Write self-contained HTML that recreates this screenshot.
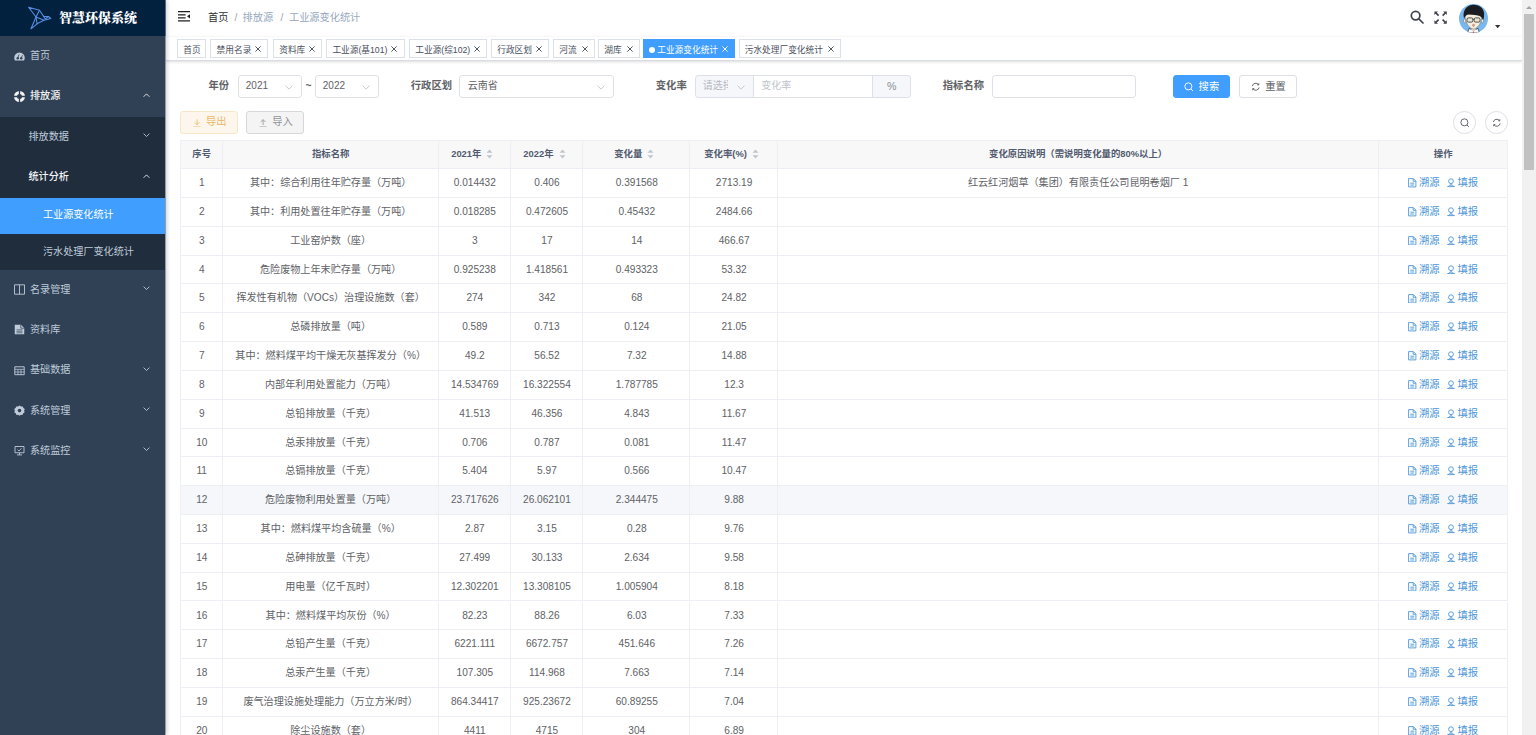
<!DOCTYPE html>
<html lang="zh-CN">
<head>
<meta charset="utf-8">
<title>智慧环保系统</title>
<style>
*{box-sizing:border-box;margin:0;padding:0}
html,body{width:1536px;height:735px;overflow:hidden;background:#fff}
body{position:relative;font-family:"Liberation Sans","Noto Sans CJK SC",sans-serif;font-size:10px;color:#606266;-webkit-font-smoothing:antialiased}
svg{display:block}
/* sidebar */
#side{position:absolute;left:0;top:0;width:165px;height:735px;background:#304156;box-shadow:1px 0 0 rgba(48,65,86,.4),2px 0 4px rgba(0,21,41,.2);z-index:5}
#logo{position:absolute;left:0;top:0;width:165px;height:36px;background:#02213f;box-shadow:1px 0 0 rgba(2,33,63,.4)}
#logo .ttl{position:absolute;left:59px;top:0;line-height:35px;font-family:"Liberation Serif","Noto Serif CJK SC",serif;font-weight:900;font-size:13px;color:#fff;white-space:nowrap}
.mi{position:absolute;left:0;width:165px;height:40.3px;line-height:40.3px;color:#bfcbd9;font-size:10.1px;white-space:nowrap}
.mi .ic{position:absolute;left:14px;top:14px;width:11px;height:11px}
.mi .tx{position:absolute;left:30px;top:-0.4px}
.mi .ar{position:absolute;left:143.2px;top:16.2px;width:7px;height:4.4px}
.mi.sub{background:#1f2d3d}
.mi.sub .tx{left:28.5px}
.mi.sub3{background:#1f2d3d;height:36.3px;line-height:36.3px}
.mi.sub3 .tx{left:43px}
.mi.on{background:#409eff;color:#fff}
.mi.open{color:#f4f4f5;font-weight:500}
/* navbar */
#nav{position:absolute;left:166px;top:0;width:1356px;height:36.5px;background:#fff;box-shadow:0 1px 3px rgba(0,21,41,.08)}
#bc{position:absolute;left:42px;top:0;line-height:35.6px;font-size:10.2px;white-space:nowrap;color:#97a8be}
#bc span{position:absolute;top:0}
/* tags */
#tags{position:absolute;left:166px;top:36.5px;width:1356px;height:24px;background:#fff;border-bottom:1px solid #d8dce5;box-shadow:0 1px 3px 0 rgba(0,0,0,.12),0 0 3px 0 rgba(0,0,0,.04)}
.tg{position:absolute;top:2.6px;height:18.8px;line-height:20px;border:1px solid #dce0e8;background:#fff;color:#495060;font-size:8.7px;white-space:nowrap;text-align:left;padding-left:5.2px}
.tg.lk{}
.tg.lk b{font-weight:400}
.tg svg{position:absolute;right:6.3px;top:6.2px}
.tg.on{background:#409eff;border-color:#409eff;color:#fff}
/* filter */
.lb{position:absolute;top:75px;height:22.4px;line-height:22.6px;font-weight:700;color:#606266;font-size:10.3px;white-space:nowrap}
.ip{position:absolute;top:75.2px;height:22.4px;border:1px solid #dde0e7;border-radius:3.2px;background:#fff;font-size:10px;line-height:20px;color:#606266;padding-left:7.3px;white-space:nowrap;overflow:hidden}
.ip .dn{position:absolute;right:8px;top:8.5px;width:8px;height:5px}
.btn{position:absolute;height:22.5px;border:1px solid #dcdfe6;border-radius:3px;font-size:10.3px;line-height:20.4px;white-space:nowrap}
.btn svg{position:absolute}
/* table */
#tb{position:absolute;left:180px;top:140px;width:1327.9px;height:600px;border-left:1px solid #edeff5;border-top:1px solid #edeff5}
.tr{position:absolute;left:0;width:1326.9px;height:28.82px;border-bottom:1px solid #edeff5;line-height:28px;font-size:10.1px;color:#606266}
.tr.hd{background:#f8f8f9;color:#515a6e;font-weight:700;font-size:9.4px;line-height:25px}
.tr.hv{background:#f5f7fa}
.c{position:absolute;top:0;height:100%;border-right:1px solid #edeff5;text-align:center;white-space:nowrap;overflow:hidden;padding-left:1px}
.c1{left:0;width:41.5px}.c2{left:41.5px;width:216.3px}.c3{left:257.8px;width:72px}.c4{left:329.8px;width:72.3px}
.c5{left:402.1px;width:107.4px}.c6{left:509.5px;width:87.2px}.c7{left:596.7px;width:600.9px}.c8{left:1197.6px;width:129.3px;padding-left:1px}
.op{color:#4d95d8;font-size:10.3px}
.so{display:inline-block;vertical-align:middle;width:17px;height:10px;position:relative;top:-1px}
/* scrollbar */
#sb{position:absolute;left:1522.4px;top:0;width:13.6px;height:735px;background:#f1f1f1}
#sb .th{position:absolute;left:1.7px;top:13.7px;width:10.2px;height:156.5px;background:#c1c1c1}
#sb .up{position:absolute;left:3.9px;top:5.8px;width:0;height:0;border-left:3px solid transparent;border-right:3px solid transparent;border-bottom:3.3px solid #a3a3a3}
</style>
</head>
<body>
<div id="side">
<div id="logo"><svg style="position:absolute;left:24px;top:2px" width="32" height="32" viewBox="0 0 32 32" fill="none" stroke="#588fe4" stroke-width="1.05" stroke-linejoin="round" stroke-linecap="round">
<path d="M4.6 5.2 L15.5 8.3 L12 15 Z"/>
<path d="M15.5 8.3 L19.6 14.4 L24.4 14.5 L26.8 16.5 L20 18.3 L13.1 21.8 L7 26.8 L12 15"/>
<path d="M12 15 L13.1 21.8 M12 15 L20 18.3"/>
<path d="M19.6 14.4 L21.3 17 L24.4 14.5"/>
</svg><div class="ttl">智慧环保系统</div></div>
<div class="mi " style="top:36.6px"><svg class="ic" viewBox="0 0 22 22"><path d="M11 3 A10.5 10.5 0 0 0 0.5 13.5 C0.5 15.5 1 17.2 2 18.8 L20 18.8 C21 17.2 21.5 15.5 21.5 13.5 A10.5 10.5 0 0 0 11 3 Z" fill="currentColor"/><circle cx="7.5" cy="14.5" r="2.4" fill="#304156"/><circle cx="14.5" cy="14.5" r="2.4" fill="#304156"/><path d="M7.5 14.5 L10 7 M14.5 14.5 L17 8.5" stroke="#304156" stroke-width="1.6"/></svg><span class="tx">首页</span></div>
<div class="mi open" style="top:76.87px"><svg class="ic" viewBox="0 0 22 22"><circle cx="11" cy="11" r="8" fill="none" stroke="currentColor" stroke-width="6"/><path d="M11 0 V22 M0 11 H22" stroke="#304156" stroke-width="2.6"/></svg><span class="tx">排放源</span><svg class="ar" viewBox="0 0 8 5"><path d="M0.7 4.3 L4 1 L7.3 4.3" fill="none" stroke="currentColor" stroke-width="1"/></svg></div>
<div class="mi sub" style="top:117.14000000000001px"><span class="tx">排放数据</span><svg class="ar" viewBox="0 0 8 5"><path d="M0.7 0.7 L4 4 L7.3 0.7" fill="none" stroke="currentColor" stroke-width="1"/></svg></div>
<div class="mi sub open" style="top:157.41000000000003px"><span class="tx">统计分析</span><svg class="ar" viewBox="0 0 8 5"><path d="M0.7 4.3 L4 1 L7.3 4.3" fill="none" stroke="currentColor" stroke-width="1"/></svg></div>
<div class="mi sub3 on" style="top:197.68000000000004px"><span class="tx">工业源变化统计</span></div>
<div class="mi sub3" style="top:233.92000000000004px"><span class="tx">污水处理厂变化统计</span></div>
<div class="mi " style="top:270.16px"><svg class="ic" viewBox="0 0 22 22"><path d="M1 1.6 H21 V20.4 H1 Z M11 1.6 V20.4" fill="none" stroke="currentColor" stroke-width="1.8"/></svg><span class="tx">名录管理</span><svg class="ar" viewBox="0 0 8 5"><path d="M0.7 0.7 L4 4 L7.3 0.7" fill="none" stroke="currentColor" stroke-width="1"/></svg></div>
<div class="mi " style="top:310.43px"><svg class="ic" viewBox="0 0 22 22"><path d="M1.5 1.5 H14 L20.5 8 V20.5 H1.5 Z" fill="currentColor"/><path d="M13.6 1.5 V8.4 H20.5" fill="none" stroke="#304156" stroke-width="1.5"/><path d="M5 11.6 H17 M5 14.6 H17 M5 17.6 H17" stroke="#304156" stroke-width="1.3"/></svg><span class="tx">资料库</span></div>
<div class="mi " style="top:350.7px"><svg class="ic" viewBox="0 0 22 22"><path d="M1.6 3.6 H20.4 V19.4 H1.6 Z" fill="none" stroke="currentColor" stroke-width="1.9"/><path d="M1.6 8.6 H20.4 M1.6 14 H20.4 M8 8.6 V19.4 M14 8.6 V19.4" stroke="currentColor" stroke-width="1.5"/></svg><span class="tx">基础数据</span><svg class="ar" viewBox="0 0 8 5"><path d="M0.7 0.7 L4 4 L7.3 0.7" fill="none" stroke="currentColor" stroke-width="1"/></svg></div>
<div class="mi " style="top:390.96999999999997px"><svg class="ic" viewBox="0 0 22 22"><path d="M11 1 L14 3 L17.5 2.8 L18.8 6 L21.5 8.2 L20.3 11.5 L21.2 14.8 L18.3 16.6 L17 19.8 L13.6 19.6 L11 21.6 L8.2 19.6 L4.8 19.8 L3.6 16.6 L0.7 14.8 L1.6 11.5 L0.5 8.2 L3.2 6 L4.5 2.8 L8 3 Z" fill="currentColor"/><circle cx="11" cy="11.2" r="3.6" fill="#304156"/></svg><span class="tx">系统管理</span><svg class="ar" viewBox="0 0 8 5"><path d="M0.7 0.7 L4 4 L7.3 0.7" fill="none" stroke="currentColor" stroke-width="1"/></svg></div>
<div class="mi " style="top:431.23999999999995px"><svg class="ic" viewBox="0 0 22 22"><path d="M2 3 H20 V15.5 H2 Z" fill="none" stroke="currentColor" stroke-width="1.8"/><path d="M11 15.5 V19.5 M6 19.8 H16" stroke="currentColor" stroke-width="1.8"/><path d="M7 9.5 L10 12 L15 6.5" fill="none" stroke="currentColor" stroke-width="1.6"/></svg><span class="tx">系统监控</span><svg class="ar" viewBox="0 0 8 5"><path d="M0.7 0.7 L4 4 L7.3 0.7" fill="none" stroke="currentColor" stroke-width="1"/></svg></div>
</div>
<div id="nav"><svg style="position:absolute;left:12px;top:11.4px" width="12" height="10.6" viewBox="0 0 12 10.6"><path d="M0 0.7 H12 M0 3.8 H7.6 M0 6.8 H7.6 M0 9.9 H12" stroke="#1f1f1f" stroke-width="1.25"/><path d="M12 3.2 L9 5.3 L12 7.4 Z" fill="#1f1f1f"/></svg>
<div id="bc"><span style="left:0;color:#303133">首页</span><span style="left:26.4px;color:#9da0a6;font-weight:400">/</span><span style="left:34.6px">排放源</span><span style="left:72.4px;color:#9da0a6;font-weight:400">/</span><span style="left:81px">工业源变化统计</span></div>
<svg style="position:absolute;left:1243.6px;top:10.4px" width="14" height="14" viewBox="0 0 14 14" fill="none" stroke="#40444d" stroke-width="1.7"><circle cx="5.6" cy="5.6" r="4.3"/><path d="M8.8 8.8 L13 13" stroke-linecap="round"/></svg><svg style="position:absolute;left:1268px;top:10.8px" width="13.2" height="13.2" viewBox="0 0 13.2 13.2" fill="#40444d" stroke="#40444d" stroke-width="1.6">
<path d="M4.6 4.6 L1.6 1.6 M8.6 4.6 L11.6 1.6 M4.6 8.6 L1.6 11.6 M8.6 8.6 L11.6 11.6" fill="none"/>
<path d="M0.4 0.4 H4 L0.4 4 Z M12.8 0.4 V4 L9.2 0.4 Z M0.4 12.8 V9.2 L4 12.8 Z M12.8 12.8 H9.2 L12.8 9.2 Z" stroke="none"/></svg><svg style="position:absolute;left:1293px;top:4.1px" width="29" height="29" viewBox="0 0 29 29">
<defs><clipPath id="avc"><circle cx="14.5" cy="14.5" r="14.5"/></clipPath></defs>
<g clip-path="url(#avc)"><rect width="29" height="29" fill="#78b8ee"/>
<path d="M8.6 29 L10 24.4 L14.5 26.4 L19 24.4 L20.4 29 Z" fill="#fafafa" stroke="#2a3442" stroke-width="0.7"/>
<path d="M12.4 22.5 H16.6 V26 L14.5 27.6 L12.4 26 Z" fill="#e9d9c4"/>
<ellipse cx="5.7" cy="16.8" rx="1.2" ry="1.9" fill="#f5ecdc" stroke="#555" stroke-width="0.4"/><ellipse cx="23.3" cy="16.8" rx="1.2" ry="1.9" fill="#f5ecdc" stroke="#555" stroke-width="0.4"/>
<path d="M6 10 C5.8 19 10.5 24.9 14.5 24.9 C18.5 24.9 23.2 19 23 10 Z" fill="#f5ecdc" stroke="#555" stroke-width="0.4"/>
<path d="M4.8 13.6 C3.2 5.4 9 0.7 14.5 0.7 C21 0.7 26.2 5 25 12.4 C24.9 14 24.5 15.6 24 15.8 C22.8 12.4 20 11.4 16 11 C12 10.6 8.4 10 7.2 11.6 C6.4 12.6 5.6 12.8 5.4 14.4 Z" fill="#1b1d22"/>
<rect x="8" y="13.9" width="5.8" height="4.2" rx="1.3" fill="#e9e6d6" stroke="#2b2b2b" stroke-width="0.8"/><rect x="15.2" y="13.9" width="5.8" height="4.2" rx="1.3" fill="#e9e6d6" stroke="#2b2b2b" stroke-width="0.8"/><path d="M13.8 15.4 H15.2" stroke="#2b2b2b" stroke-width="0.8"/>
<ellipse cx="14.5" cy="21.3" rx="1" ry="1.2" fill="#e3a08c" stroke="#8a5a4a" stroke-width="0.3"/>
<path d="M14.5 26.4 L13.9 29 H15.1 Z" fill="#c9504a"/>
</g></svg><svg style="position:absolute;left:1329.2px;top:24.6px" width="5.4" height="3.3" viewBox="0 0 5.4 3.3"><path d="M0 0 H5.4 L2.7 3.3 Z" fill="#33363c"/></svg></div>
<div id="tags">
<div class="tg" style="left:11.0px;width:29.2px">首页</div>
<div class="tg" style="left:44.4px;width:58.1px">禁用名录<svg width="6" height="6" viewBox="0 0 6 6"><path d="M0.4 0.4 L5.6 5.6 M5.6 0.4 L0.4 5.6" stroke="currentColor" stroke-width="0.95" fill="none"/></svg></div>
<div class="tg" style="left:107.0px;width:49.2px">资料库<svg width="6" height="6" viewBox="0 0 6 6"><path d="M0.4 0.4 L5.6 5.6 M5.6 0.4 L0.4 5.6" stroke="currentColor" stroke-width="0.95" fill="none"/></svg></div>
<div class="tg lk" style="left:160.2px;width:78.5px"><b>工业源(基101)</b><svg width="6" height="6" viewBox="0 0 6 6"><path d="M0.4 0.4 L5.6 5.6 M5.6 0.4 L0.4 5.6" stroke="currentColor" stroke-width="0.95" fill="none"/></svg></div>
<div class="tg lk" style="left:243.0px;width:78.0px"><b>工业源(综102)</b><svg width="6" height="6" viewBox="0 0 6 6"><path d="M0.4 0.4 L5.6 5.6 M5.6 0.4 L0.4 5.6" stroke="currentColor" stroke-width="0.95" fill="none"/></svg></div>
<div class="tg" style="left:325.0px;width:58.0px">行政区划<svg width="6" height="6" viewBox="0 0 6 6"><path d="M0.4 0.4 L5.6 5.6 M5.6 0.4 L0.4 5.6" stroke="currentColor" stroke-width="0.95" fill="none"/></svg></div>
<div class="tg" style="left:387.0px;width:42.0px">河流<svg width="6" height="6" viewBox="0 0 6 6"><path d="M0.4 0.4 L5.6 5.6 M5.6 0.4 L0.4 5.6" stroke="currentColor" stroke-width="0.95" fill="none"/></svg></div>
<div class="tg" style="left:432.0px;width:41.8px">湖库<svg width="6" height="6" viewBox="0 0 6 6"><path d="M0.4 0.4 L5.6 5.6 M5.6 0.4 L0.4 5.6" stroke="currentColor" stroke-width="0.95" fill="none"/></svg></div>
<div class="tg on lk" style="left:477.0px;width:91.8px"><em style="display:inline-block;width:6px;height:6px;border-radius:50%;background:#fff;margin-right:2px;position:relative;top:0px"></em><b>工业源变化统计</b><svg width="6" height="6" viewBox="0 0 6 6"><path d="M0.4 0.4 L5.6 5.6 M5.6 0.4 L0.4 5.6" stroke="currentColor" stroke-width="0.95" fill="none"/></svg></div>
<div class="tg" style="left:572.5px;width:102.3px">污水处理厂变化统计<svg width="6" height="6" viewBox="0 0 6 6"><path d="M0.4 0.4 L5.6 5.6 M5.6 0.4 L0.4 5.6" stroke="currentColor" stroke-width="0.95" fill="none"/></svg></div>
</div>
<div class="lb" style="left:208.5px">年份</div>
<div class="ip" style="left:237.5px;width:64.3px">2021<svg class="dn" viewBox="0 0 8 5"><path d="M0.5 0.6 L4 4.2 L7.5 0.6" fill="none" stroke="#c0c4cc" stroke-width="0.9"/></svg></div>
<div class="lb" style="left:305.4px">~</div>
<div class="ip" style="left:314.5px;width:64.3px">2022<svg class="dn" viewBox="0 0 8 5"><path d="M0.5 0.6 L4 4.2 L7.5 0.6" fill="none" stroke="#c0c4cc" stroke-width="0.9"/></svg></div>
<div class="lb" style="left:410.8px">行政区划</div>
<div class="ip" style="left:459.4px;width:154.6px">云南省<svg class="dn" viewBox="0 0 8 5"><path d="M0.5 0.6 L4 4.2 L7.5 0.6" fill="none" stroke="#c0c4cc" stroke-width="0.9"/></svg></div>
<div class="lb" style="left:655.8px">变化率</div>
<div class="ip" style="left:695.3px;width:58.6px;background:#f5f7fa;border-radius:3.2px 0 0 3.2px;color:#b4b8c0;padding-left:6.5px"><span style="display:inline-block;width:25.6px;overflow:hidden;vertical-align:top">请选择</span><svg class="dn" viewBox="0 0 8 5"><path d="M0.5 0.6 L4 4.2 L7.5 0.6" fill="none" stroke="#c0c4cc" stroke-width="0.9"/></svg></div>
<div class="ip" style="left:752.9px;width:120px;border-radius:0;color:#c0c4cc">变化率</div>
<div class="ip" style="left:871.9px;width:38.8px;background:#f5f7fa;border-radius:0 3.2px 3.2px 0;color:#8a8d93;padding:0 0 0 1px;text-align:center;font-size:10.6px">%</div>
<div class="lb" style="left:942.8px">指标名称</div>
<div class="ip" style="left:992px;width:143.8px"></div>
<div class="btn" style="left:1173px;top:75.2px;width:57.4px;background:#409eff;border-color:#409eff;color:#fff"><svg style="left:10.4px;top:5.4px" width="9.5" height="9.5" viewBox="0 0 10 10" fill="none" stroke="#fff" stroke-width="1"><circle cx="4.6" cy="4.6" r="3.7"/><path d="M7.3 7.3 L9.4 9.4"/></svg><span style="position:absolute;left:24.6px;top:0.4px">搜索</span></div>
<div class="btn" style="left:1239px;top:75.2px;width:57.6px;background:#fff;color:#606266"><svg style="left:11.4px;top:5.6px" width="9.5" height="9.5" viewBox="0 0 10 10" fill="none" stroke="#606266" stroke-width="1"><path d="M1.35 4.3 A3.7 3.7 0 0 1 8 2.9"/><path d="M8.65 5.7 A3.7 3.7 0 0 1 2 7.1"/><path d="M8.2 1.3 V3 H6.5" /><path d="M1.8 8.7 V7 H3.5"/></svg><span style="position:absolute;left:25.2px;top:0.4px">重置</span></div>
<div class="btn" style="left:180px;top:111px;width:57.5px;background:#fdf6ec;border-color:#f8e6c8;color:#e9b766"><svg style="left:11.8px;top:6.6px" width="8.2" height="8.6" viewBox="0 0 9 9.5" fill="none" stroke="#e9b766" stroke-width="0.9"><path d="M4.5 0.3 V6.2 M1.8 3.6 L4.5 6.3 L7.2 3.6 M0.6 8.8 H8.4"/></svg><span style="position:absolute;left:25px;top:0">导出</span></div>
<div class="btn" style="left:246.2px;top:111px;width:57.6px;background:#f4f4f5;border-color:#d6d7da;color:#909399"><svg style="left:11.8px;top:6.6px" width="8.2" height="8.6" viewBox="0 0 9 9.5" fill="none" stroke="#909399" stroke-width="0.9"><path d="M4.5 6.6 V0.8 M1.8 3.4 L4.5 0.7 L7.2 3.4 M0.6 8.8 H8.4"/></svg><span style="position:absolute;left:25px;top:0">导入</span></div>
<div class="btn" style="left:1453.1px;top:111px;width:22.8px;height:22.8px;border-radius:50%;background:#fff"><svg style="left:6px;top:6px" width="9.5" height="9.5" viewBox="0 0 10 10" fill="none" stroke="#606266" stroke-width="1"><circle cx="4.6" cy="4.6" r="3.7"/><path d="M7.3 7.3 L9.4 9.4"/></svg></div>
<div class="btn" style="left:1485px;top:111px;width:22.8px;height:22.8px;border-radius:50%;background:#fff"><svg style="left:6px;top:6px" width="9.5" height="9.5" viewBox="0 0 10 10" fill="none" stroke="#606266" stroke-width="1"><path d="M1.35 4.3 A3.7 3.7 0 0 1 8 2.9"/><path d="M8.65 5.7 A3.7 3.7 0 0 1 2 7.1"/><path d="M8.2 1.3 V3 H6.5" /><path d="M1.8 8.7 V7 H3.5"/></svg></div>
<div id="tb">
<div class="tr hd" style="top:0;height:28.2px"><div class="c c1">序号</div><div class="c c2">指标名称</div><div class="c c3">2021年<svg class="so" viewBox="0 0 17 10"><path d="M8.5 0.4 L11.5 3.8 H5.5 Z M8.5 9.6 L11.5 6.2 H5.5 Z" fill="#c0c4cc"/></svg></div><div class="c c4">2022年<svg class="so" viewBox="0 0 17 10"><path d="M8.5 0.4 L11.5 3.8 H5.5 Z M8.5 9.6 L11.5 6.2 H5.5 Z" fill="#c0c4cc"/></svg></div><div class="c c5">变化量<svg class="so" viewBox="0 0 17 10"><path d="M8.5 0.4 L11.5 3.8 H5.5 Z M8.5 9.6 L11.5 6.2 H5.5 Z" fill="#c0c4cc"/></svg></div><div class="c c6">变化率(%)<svg class="so" viewBox="0 0 17 10"><path d="M8.5 0.4 L11.5 3.8 H5.5 Z M8.5 9.6 L11.5 6.2 H5.5 Z" fill="#c0c4cc"/></svg></div><div class="c c7">变化原因说明（需说明变化量的80%以上）</div><div class="c c8">操作</div></div>
<div class="tr" style="top:28.20px"><div class="c c1">1</div><div class="c c2">其中：综合利用往年贮存量（万吨）</div><div class="c c3">0.014432</div><div class="c c4">0.406</div><div class="c c5">0.391568</div><div class="c c6">2713.19</div><div class="c c7">红云红河烟草（集团）有限责任公司昆明卷烟厂 1</div><div class="c c8"><span class="op"><svg style="display:inline-block;vertical-align:middle;position:relative;top:-0.5px;margin-right:2px" width="8.5" height="9.5" viewBox="0 0 8.5 9.5" fill="none" stroke="#4d95d8" stroke-width="0.9"><path d="M0.6 0.6 H5.4 L7.9 3.1 V8.9 H0.6 Z M5.2 0.8 V3.3 H7.7 M2.3 5.2 H6.2 M2.3 7 H6.2"/></svg>溯源</span><span class="op" style="margin-left:8px"><svg style="display:inline-block;vertical-align:middle;position:relative;top:-0.5px;margin-right:2px" width="8" height="9.5" viewBox="0 0 8 9.5" fill="none" stroke="#4d95d8" stroke-width="0.9"><circle cx="4" cy="3.2" r="2.4"/><path d="M4 5.6 V7.2 M0.3 8.6 H7.7 M1.4 8.6 C1.8 7.4 2.8 7.1 4 7.1 C5.2 7.1 6.2 7.4 6.6 8.6" /></svg>填报</span></div></div>
<div class="tr" style="top:57.02px"><div class="c c1">2</div><div class="c c2">其中：利用处置往年贮存量（万吨）</div><div class="c c3">0.018285</div><div class="c c4">0.472605</div><div class="c c5">0.45432</div><div class="c c6">2484.66</div><div class="c c7"></div><div class="c c8"><span class="op"><svg style="display:inline-block;vertical-align:middle;position:relative;top:-0.5px;margin-right:2px" width="8.5" height="9.5" viewBox="0 0 8.5 9.5" fill="none" stroke="#4d95d8" stroke-width="0.9"><path d="M0.6 0.6 H5.4 L7.9 3.1 V8.9 H0.6 Z M5.2 0.8 V3.3 H7.7 M2.3 5.2 H6.2 M2.3 7 H6.2"/></svg>溯源</span><span class="op" style="margin-left:8px"><svg style="display:inline-block;vertical-align:middle;position:relative;top:-0.5px;margin-right:2px" width="8" height="9.5" viewBox="0 0 8 9.5" fill="none" stroke="#4d95d8" stroke-width="0.9"><circle cx="4" cy="3.2" r="2.4"/><path d="M4 5.6 V7.2 M0.3 8.6 H7.7 M1.4 8.6 C1.8 7.4 2.8 7.1 4 7.1 C5.2 7.1 6.2 7.4 6.6 8.6" /></svg>填报</span></div></div>
<div class="tr" style="top:85.84px"><div class="c c1">3</div><div class="c c2">工业窑炉数（座）</div><div class="c c3">3</div><div class="c c4">17</div><div class="c c5">14</div><div class="c c6">466.67</div><div class="c c7"></div><div class="c c8"><span class="op"><svg style="display:inline-block;vertical-align:middle;position:relative;top:-0.5px;margin-right:2px" width="8.5" height="9.5" viewBox="0 0 8.5 9.5" fill="none" stroke="#4d95d8" stroke-width="0.9"><path d="M0.6 0.6 H5.4 L7.9 3.1 V8.9 H0.6 Z M5.2 0.8 V3.3 H7.7 M2.3 5.2 H6.2 M2.3 7 H6.2"/></svg>溯源</span><span class="op" style="margin-left:8px"><svg style="display:inline-block;vertical-align:middle;position:relative;top:-0.5px;margin-right:2px" width="8" height="9.5" viewBox="0 0 8 9.5" fill="none" stroke="#4d95d8" stroke-width="0.9"><circle cx="4" cy="3.2" r="2.4"/><path d="M4 5.6 V7.2 M0.3 8.6 H7.7 M1.4 8.6 C1.8 7.4 2.8 7.1 4 7.1 C5.2 7.1 6.2 7.4 6.6 8.6" /></svg>填报</span></div></div>
<div class="tr" style="top:114.66px"><div class="c c1">4</div><div class="c c2">危险废物上年末贮存量（万吨）</div><div class="c c3">0.925238</div><div class="c c4">1.418561</div><div class="c c5">0.493323</div><div class="c c6">53.32</div><div class="c c7"></div><div class="c c8"><span class="op"><svg style="display:inline-block;vertical-align:middle;position:relative;top:-0.5px;margin-right:2px" width="8.5" height="9.5" viewBox="0 0 8.5 9.5" fill="none" stroke="#4d95d8" stroke-width="0.9"><path d="M0.6 0.6 H5.4 L7.9 3.1 V8.9 H0.6 Z M5.2 0.8 V3.3 H7.7 M2.3 5.2 H6.2 M2.3 7 H6.2"/></svg>溯源</span><span class="op" style="margin-left:8px"><svg style="display:inline-block;vertical-align:middle;position:relative;top:-0.5px;margin-right:2px" width="8" height="9.5" viewBox="0 0 8 9.5" fill="none" stroke="#4d95d8" stroke-width="0.9"><circle cx="4" cy="3.2" r="2.4"/><path d="M4 5.6 V7.2 M0.3 8.6 H7.7 M1.4 8.6 C1.8 7.4 2.8 7.1 4 7.1 C5.2 7.1 6.2 7.4 6.6 8.6" /></svg>填报</span></div></div>
<div class="tr" style="top:143.48px"><div class="c c1">5</div><div class="c c2">挥发性有机物（VOCs）治理设施数（套）</div><div class="c c3">274</div><div class="c c4">342</div><div class="c c5">68</div><div class="c c6">24.82</div><div class="c c7"></div><div class="c c8"><span class="op"><svg style="display:inline-block;vertical-align:middle;position:relative;top:-0.5px;margin-right:2px" width="8.5" height="9.5" viewBox="0 0 8.5 9.5" fill="none" stroke="#4d95d8" stroke-width="0.9"><path d="M0.6 0.6 H5.4 L7.9 3.1 V8.9 H0.6 Z M5.2 0.8 V3.3 H7.7 M2.3 5.2 H6.2 M2.3 7 H6.2"/></svg>溯源</span><span class="op" style="margin-left:8px"><svg style="display:inline-block;vertical-align:middle;position:relative;top:-0.5px;margin-right:2px" width="8" height="9.5" viewBox="0 0 8 9.5" fill="none" stroke="#4d95d8" stroke-width="0.9"><circle cx="4" cy="3.2" r="2.4"/><path d="M4 5.6 V7.2 M0.3 8.6 H7.7 M1.4 8.6 C1.8 7.4 2.8 7.1 4 7.1 C5.2 7.1 6.2 7.4 6.6 8.6" /></svg>填报</span></div></div>
<div class="tr" style="top:172.30px"><div class="c c1">6</div><div class="c c2">总磷排放量（吨）</div><div class="c c3">0.589</div><div class="c c4">0.713</div><div class="c c5">0.124</div><div class="c c6">21.05</div><div class="c c7"></div><div class="c c8"><span class="op"><svg style="display:inline-block;vertical-align:middle;position:relative;top:-0.5px;margin-right:2px" width="8.5" height="9.5" viewBox="0 0 8.5 9.5" fill="none" stroke="#4d95d8" stroke-width="0.9"><path d="M0.6 0.6 H5.4 L7.9 3.1 V8.9 H0.6 Z M5.2 0.8 V3.3 H7.7 M2.3 5.2 H6.2 M2.3 7 H6.2"/></svg>溯源</span><span class="op" style="margin-left:8px"><svg style="display:inline-block;vertical-align:middle;position:relative;top:-0.5px;margin-right:2px" width="8" height="9.5" viewBox="0 0 8 9.5" fill="none" stroke="#4d95d8" stroke-width="0.9"><circle cx="4" cy="3.2" r="2.4"/><path d="M4 5.6 V7.2 M0.3 8.6 H7.7 M1.4 8.6 C1.8 7.4 2.8 7.1 4 7.1 C5.2 7.1 6.2 7.4 6.6 8.6" /></svg>填报</span></div></div>
<div class="tr" style="top:201.12px"><div class="c c1">7</div><div class="c c2">其中：燃料煤平均干燥无灰基挥发分（%）</div><div class="c c3">49.2</div><div class="c c4">56.52</div><div class="c c5">7.32</div><div class="c c6">14.88</div><div class="c c7"></div><div class="c c8"><span class="op"><svg style="display:inline-block;vertical-align:middle;position:relative;top:-0.5px;margin-right:2px" width="8.5" height="9.5" viewBox="0 0 8.5 9.5" fill="none" stroke="#4d95d8" stroke-width="0.9"><path d="M0.6 0.6 H5.4 L7.9 3.1 V8.9 H0.6 Z M5.2 0.8 V3.3 H7.7 M2.3 5.2 H6.2 M2.3 7 H6.2"/></svg>溯源</span><span class="op" style="margin-left:8px"><svg style="display:inline-block;vertical-align:middle;position:relative;top:-0.5px;margin-right:2px" width="8" height="9.5" viewBox="0 0 8 9.5" fill="none" stroke="#4d95d8" stroke-width="0.9"><circle cx="4" cy="3.2" r="2.4"/><path d="M4 5.6 V7.2 M0.3 8.6 H7.7 M1.4 8.6 C1.8 7.4 2.8 7.1 4 7.1 C5.2 7.1 6.2 7.4 6.6 8.6" /></svg>填报</span></div></div>
<div class="tr" style="top:229.94px"><div class="c c1">8</div><div class="c c2">内部年利用处置能力（万吨）</div><div class="c c3">14.534769</div><div class="c c4">16.322554</div><div class="c c5">1.787785</div><div class="c c6">12.3</div><div class="c c7"></div><div class="c c8"><span class="op"><svg style="display:inline-block;vertical-align:middle;position:relative;top:-0.5px;margin-right:2px" width="8.5" height="9.5" viewBox="0 0 8.5 9.5" fill="none" stroke="#4d95d8" stroke-width="0.9"><path d="M0.6 0.6 H5.4 L7.9 3.1 V8.9 H0.6 Z M5.2 0.8 V3.3 H7.7 M2.3 5.2 H6.2 M2.3 7 H6.2"/></svg>溯源</span><span class="op" style="margin-left:8px"><svg style="display:inline-block;vertical-align:middle;position:relative;top:-0.5px;margin-right:2px" width="8" height="9.5" viewBox="0 0 8 9.5" fill="none" stroke="#4d95d8" stroke-width="0.9"><circle cx="4" cy="3.2" r="2.4"/><path d="M4 5.6 V7.2 M0.3 8.6 H7.7 M1.4 8.6 C1.8 7.4 2.8 7.1 4 7.1 C5.2 7.1 6.2 7.4 6.6 8.6" /></svg>填报</span></div></div>
<div class="tr" style="top:258.76px"><div class="c c1">9</div><div class="c c2">总铅排放量（千克）</div><div class="c c3">41.513</div><div class="c c4">46.356</div><div class="c c5">4.843</div><div class="c c6">11.67</div><div class="c c7"></div><div class="c c8"><span class="op"><svg style="display:inline-block;vertical-align:middle;position:relative;top:-0.5px;margin-right:2px" width="8.5" height="9.5" viewBox="0 0 8.5 9.5" fill="none" stroke="#4d95d8" stroke-width="0.9"><path d="M0.6 0.6 H5.4 L7.9 3.1 V8.9 H0.6 Z M5.2 0.8 V3.3 H7.7 M2.3 5.2 H6.2 M2.3 7 H6.2"/></svg>溯源</span><span class="op" style="margin-left:8px"><svg style="display:inline-block;vertical-align:middle;position:relative;top:-0.5px;margin-right:2px" width="8" height="9.5" viewBox="0 0 8 9.5" fill="none" stroke="#4d95d8" stroke-width="0.9"><circle cx="4" cy="3.2" r="2.4"/><path d="M4 5.6 V7.2 M0.3 8.6 H7.7 M1.4 8.6 C1.8 7.4 2.8 7.1 4 7.1 C5.2 7.1 6.2 7.4 6.6 8.6" /></svg>填报</span></div></div>
<div class="tr" style="top:287.58px"><div class="c c1">10</div><div class="c c2">总汞排放量（千克）</div><div class="c c3">0.706</div><div class="c c4">0.787</div><div class="c c5">0.081</div><div class="c c6">11.47</div><div class="c c7"></div><div class="c c8"><span class="op"><svg style="display:inline-block;vertical-align:middle;position:relative;top:-0.5px;margin-right:2px" width="8.5" height="9.5" viewBox="0 0 8.5 9.5" fill="none" stroke="#4d95d8" stroke-width="0.9"><path d="M0.6 0.6 H5.4 L7.9 3.1 V8.9 H0.6 Z M5.2 0.8 V3.3 H7.7 M2.3 5.2 H6.2 M2.3 7 H6.2"/></svg>溯源</span><span class="op" style="margin-left:8px"><svg style="display:inline-block;vertical-align:middle;position:relative;top:-0.5px;margin-right:2px" width="8" height="9.5" viewBox="0 0 8 9.5" fill="none" stroke="#4d95d8" stroke-width="0.9"><circle cx="4" cy="3.2" r="2.4"/><path d="M4 5.6 V7.2 M0.3 8.6 H7.7 M1.4 8.6 C1.8 7.4 2.8 7.1 4 7.1 C5.2 7.1 6.2 7.4 6.6 8.6" /></svg>填报</span></div></div>
<div class="tr" style="top:316.40px"><div class="c c1">11</div><div class="c c2">总镉排放量（千克）</div><div class="c c3">5.404</div><div class="c c4">5.97</div><div class="c c5">0.566</div><div class="c c6">10.47</div><div class="c c7"></div><div class="c c8"><span class="op"><svg style="display:inline-block;vertical-align:middle;position:relative;top:-0.5px;margin-right:2px" width="8.5" height="9.5" viewBox="0 0 8.5 9.5" fill="none" stroke="#4d95d8" stroke-width="0.9"><path d="M0.6 0.6 H5.4 L7.9 3.1 V8.9 H0.6 Z M5.2 0.8 V3.3 H7.7 M2.3 5.2 H6.2 M2.3 7 H6.2"/></svg>溯源</span><span class="op" style="margin-left:8px"><svg style="display:inline-block;vertical-align:middle;position:relative;top:-0.5px;margin-right:2px" width="8" height="9.5" viewBox="0 0 8 9.5" fill="none" stroke="#4d95d8" stroke-width="0.9"><circle cx="4" cy="3.2" r="2.4"/><path d="M4 5.6 V7.2 M0.3 8.6 H7.7 M1.4 8.6 C1.8 7.4 2.8 7.1 4 7.1 C5.2 7.1 6.2 7.4 6.6 8.6" /></svg>填报</span></div></div>
<div class="tr hv" style="top:345.22px"><div class="c c1">12</div><div class="c c2">危险废物利用处置量（万吨）</div><div class="c c3">23.717626</div><div class="c c4">26.062101</div><div class="c c5">2.344475</div><div class="c c6">9.88</div><div class="c c7"></div><div class="c c8"><span class="op"><svg style="display:inline-block;vertical-align:middle;position:relative;top:-0.5px;margin-right:2px" width="8.5" height="9.5" viewBox="0 0 8.5 9.5" fill="none" stroke="#4d95d8" stroke-width="0.9"><path d="M0.6 0.6 H5.4 L7.9 3.1 V8.9 H0.6 Z M5.2 0.8 V3.3 H7.7 M2.3 5.2 H6.2 M2.3 7 H6.2"/></svg>溯源</span><span class="op" style="margin-left:8px"><svg style="display:inline-block;vertical-align:middle;position:relative;top:-0.5px;margin-right:2px" width="8" height="9.5" viewBox="0 0 8 9.5" fill="none" stroke="#4d95d8" stroke-width="0.9"><circle cx="4" cy="3.2" r="2.4"/><path d="M4 5.6 V7.2 M0.3 8.6 H7.7 M1.4 8.6 C1.8 7.4 2.8 7.1 4 7.1 C5.2 7.1 6.2 7.4 6.6 8.6" /></svg>填报</span></div></div>
<div class="tr" style="top:374.04px"><div class="c c1">13</div><div class="c c2">其中：燃料煤平均含硫量（%）</div><div class="c c3">2.87</div><div class="c c4">3.15</div><div class="c c5">0.28</div><div class="c c6">9.76</div><div class="c c7"></div><div class="c c8"><span class="op"><svg style="display:inline-block;vertical-align:middle;position:relative;top:-0.5px;margin-right:2px" width="8.5" height="9.5" viewBox="0 0 8.5 9.5" fill="none" stroke="#4d95d8" stroke-width="0.9"><path d="M0.6 0.6 H5.4 L7.9 3.1 V8.9 H0.6 Z M5.2 0.8 V3.3 H7.7 M2.3 5.2 H6.2 M2.3 7 H6.2"/></svg>溯源</span><span class="op" style="margin-left:8px"><svg style="display:inline-block;vertical-align:middle;position:relative;top:-0.5px;margin-right:2px" width="8" height="9.5" viewBox="0 0 8 9.5" fill="none" stroke="#4d95d8" stroke-width="0.9"><circle cx="4" cy="3.2" r="2.4"/><path d="M4 5.6 V7.2 M0.3 8.6 H7.7 M1.4 8.6 C1.8 7.4 2.8 7.1 4 7.1 C5.2 7.1 6.2 7.4 6.6 8.6" /></svg>填报</span></div></div>
<div class="tr" style="top:402.86px"><div class="c c1">14</div><div class="c c2">总砷排放量（千克）</div><div class="c c3">27.499</div><div class="c c4">30.133</div><div class="c c5">2.634</div><div class="c c6">9.58</div><div class="c c7"></div><div class="c c8"><span class="op"><svg style="display:inline-block;vertical-align:middle;position:relative;top:-0.5px;margin-right:2px" width="8.5" height="9.5" viewBox="0 0 8.5 9.5" fill="none" stroke="#4d95d8" stroke-width="0.9"><path d="M0.6 0.6 H5.4 L7.9 3.1 V8.9 H0.6 Z M5.2 0.8 V3.3 H7.7 M2.3 5.2 H6.2 M2.3 7 H6.2"/></svg>溯源</span><span class="op" style="margin-left:8px"><svg style="display:inline-block;vertical-align:middle;position:relative;top:-0.5px;margin-right:2px" width="8" height="9.5" viewBox="0 0 8 9.5" fill="none" stroke="#4d95d8" stroke-width="0.9"><circle cx="4" cy="3.2" r="2.4"/><path d="M4 5.6 V7.2 M0.3 8.6 H7.7 M1.4 8.6 C1.8 7.4 2.8 7.1 4 7.1 C5.2 7.1 6.2 7.4 6.6 8.6" /></svg>填报</span></div></div>
<div class="tr" style="top:431.68px"><div class="c c1">15</div><div class="c c2">用电量（亿千瓦时）</div><div class="c c3">12.302201</div><div class="c c4">13.308105</div><div class="c c5">1.005904</div><div class="c c6">8.18</div><div class="c c7"></div><div class="c c8"><span class="op"><svg style="display:inline-block;vertical-align:middle;position:relative;top:-0.5px;margin-right:2px" width="8.5" height="9.5" viewBox="0 0 8.5 9.5" fill="none" stroke="#4d95d8" stroke-width="0.9"><path d="M0.6 0.6 H5.4 L7.9 3.1 V8.9 H0.6 Z M5.2 0.8 V3.3 H7.7 M2.3 5.2 H6.2 M2.3 7 H6.2"/></svg>溯源</span><span class="op" style="margin-left:8px"><svg style="display:inline-block;vertical-align:middle;position:relative;top:-0.5px;margin-right:2px" width="8" height="9.5" viewBox="0 0 8 9.5" fill="none" stroke="#4d95d8" stroke-width="0.9"><circle cx="4" cy="3.2" r="2.4"/><path d="M4 5.6 V7.2 M0.3 8.6 H7.7 M1.4 8.6 C1.8 7.4 2.8 7.1 4 7.1 C5.2 7.1 6.2 7.4 6.6 8.6" /></svg>填报</span></div></div>
<div class="tr" style="top:460.50px"><div class="c c1">16</div><div class="c c2">其中：燃料煤平均灰份（%）</div><div class="c c3">82.23</div><div class="c c4">88.26</div><div class="c c5">6.03</div><div class="c c6">7.33</div><div class="c c7"></div><div class="c c8"><span class="op"><svg style="display:inline-block;vertical-align:middle;position:relative;top:-0.5px;margin-right:2px" width="8.5" height="9.5" viewBox="0 0 8.5 9.5" fill="none" stroke="#4d95d8" stroke-width="0.9"><path d="M0.6 0.6 H5.4 L7.9 3.1 V8.9 H0.6 Z M5.2 0.8 V3.3 H7.7 M2.3 5.2 H6.2 M2.3 7 H6.2"/></svg>溯源</span><span class="op" style="margin-left:8px"><svg style="display:inline-block;vertical-align:middle;position:relative;top:-0.5px;margin-right:2px" width="8" height="9.5" viewBox="0 0 8 9.5" fill="none" stroke="#4d95d8" stroke-width="0.9"><circle cx="4" cy="3.2" r="2.4"/><path d="M4 5.6 V7.2 M0.3 8.6 H7.7 M1.4 8.6 C1.8 7.4 2.8 7.1 4 7.1 C5.2 7.1 6.2 7.4 6.6 8.6" /></svg>填报</span></div></div>
<div class="tr" style="top:489.32px"><div class="c c1">17</div><div class="c c2">总铅产生量（千克）</div><div class="c c3">6221.111</div><div class="c c4">6672.757</div><div class="c c5">451.646</div><div class="c c6">7.26</div><div class="c c7"></div><div class="c c8"><span class="op"><svg style="display:inline-block;vertical-align:middle;position:relative;top:-0.5px;margin-right:2px" width="8.5" height="9.5" viewBox="0 0 8.5 9.5" fill="none" stroke="#4d95d8" stroke-width="0.9"><path d="M0.6 0.6 H5.4 L7.9 3.1 V8.9 H0.6 Z M5.2 0.8 V3.3 H7.7 M2.3 5.2 H6.2 M2.3 7 H6.2"/></svg>溯源</span><span class="op" style="margin-left:8px"><svg style="display:inline-block;vertical-align:middle;position:relative;top:-0.5px;margin-right:2px" width="8" height="9.5" viewBox="0 0 8 9.5" fill="none" stroke="#4d95d8" stroke-width="0.9"><circle cx="4" cy="3.2" r="2.4"/><path d="M4 5.6 V7.2 M0.3 8.6 H7.7 M1.4 8.6 C1.8 7.4 2.8 7.1 4 7.1 C5.2 7.1 6.2 7.4 6.6 8.6" /></svg>填报</span></div></div>
<div class="tr" style="top:518.14px"><div class="c c1">18</div><div class="c c2">总汞产生量（千克）</div><div class="c c3">107.305</div><div class="c c4">114.968</div><div class="c c5">7.663</div><div class="c c6">7.14</div><div class="c c7"></div><div class="c c8"><span class="op"><svg style="display:inline-block;vertical-align:middle;position:relative;top:-0.5px;margin-right:2px" width="8.5" height="9.5" viewBox="0 0 8.5 9.5" fill="none" stroke="#4d95d8" stroke-width="0.9"><path d="M0.6 0.6 H5.4 L7.9 3.1 V8.9 H0.6 Z M5.2 0.8 V3.3 H7.7 M2.3 5.2 H6.2 M2.3 7 H6.2"/></svg>溯源</span><span class="op" style="margin-left:8px"><svg style="display:inline-block;vertical-align:middle;position:relative;top:-0.5px;margin-right:2px" width="8" height="9.5" viewBox="0 0 8 9.5" fill="none" stroke="#4d95d8" stroke-width="0.9"><circle cx="4" cy="3.2" r="2.4"/><path d="M4 5.6 V7.2 M0.3 8.6 H7.7 M1.4 8.6 C1.8 7.4 2.8 7.1 4 7.1 C5.2 7.1 6.2 7.4 6.6 8.6" /></svg>填报</span></div></div>
<div class="tr" style="top:546.96px"><div class="c c1">19</div><div class="c c2">废气治理设施处理能力（万立方米/时）</div><div class="c c3">864.34417</div><div class="c c4">925.23672</div><div class="c c5">60.89255</div><div class="c c6">7.04</div><div class="c c7"></div><div class="c c8"><span class="op"><svg style="display:inline-block;vertical-align:middle;position:relative;top:-0.5px;margin-right:2px" width="8.5" height="9.5" viewBox="0 0 8.5 9.5" fill="none" stroke="#4d95d8" stroke-width="0.9"><path d="M0.6 0.6 H5.4 L7.9 3.1 V8.9 H0.6 Z M5.2 0.8 V3.3 H7.7 M2.3 5.2 H6.2 M2.3 7 H6.2"/></svg>溯源</span><span class="op" style="margin-left:8px"><svg style="display:inline-block;vertical-align:middle;position:relative;top:-0.5px;margin-right:2px" width="8" height="9.5" viewBox="0 0 8 9.5" fill="none" stroke="#4d95d8" stroke-width="0.9"><circle cx="4" cy="3.2" r="2.4"/><path d="M4 5.6 V7.2 M0.3 8.6 H7.7 M1.4 8.6 C1.8 7.4 2.8 7.1 4 7.1 C5.2 7.1 6.2 7.4 6.6 8.6" /></svg>填报</span></div></div>
<div class="tr" style="top:575.78px"><div class="c c1">20</div><div class="c c2">除尘设施数（套）</div><div class="c c3">4411</div><div class="c c4">4715</div><div class="c c5">304</div><div class="c c6">6.89</div><div class="c c7"></div><div class="c c8"><span class="op"><svg style="display:inline-block;vertical-align:middle;position:relative;top:-0.5px;margin-right:2px" width="8.5" height="9.5" viewBox="0 0 8.5 9.5" fill="none" stroke="#4d95d8" stroke-width="0.9"><path d="M0.6 0.6 H5.4 L7.9 3.1 V8.9 H0.6 Z M5.2 0.8 V3.3 H7.7 M2.3 5.2 H6.2 M2.3 7 H6.2"/></svg>溯源</span><span class="op" style="margin-left:8px"><svg style="display:inline-block;vertical-align:middle;position:relative;top:-0.5px;margin-right:2px" width="8" height="9.5" viewBox="0 0 8 9.5" fill="none" stroke="#4d95d8" stroke-width="0.9"><circle cx="4" cy="3.2" r="2.4"/><path d="M4 5.6 V7.2 M0.3 8.6 H7.7 M1.4 8.6 C1.8 7.4 2.8 7.1 4 7.1 C5.2 7.1 6.2 7.4 6.6 8.6" /></svg>填报</span></div></div>
</div>
<div id="sb"><div class="up"></div><div class="th"></div></div>
</body>
</html>
